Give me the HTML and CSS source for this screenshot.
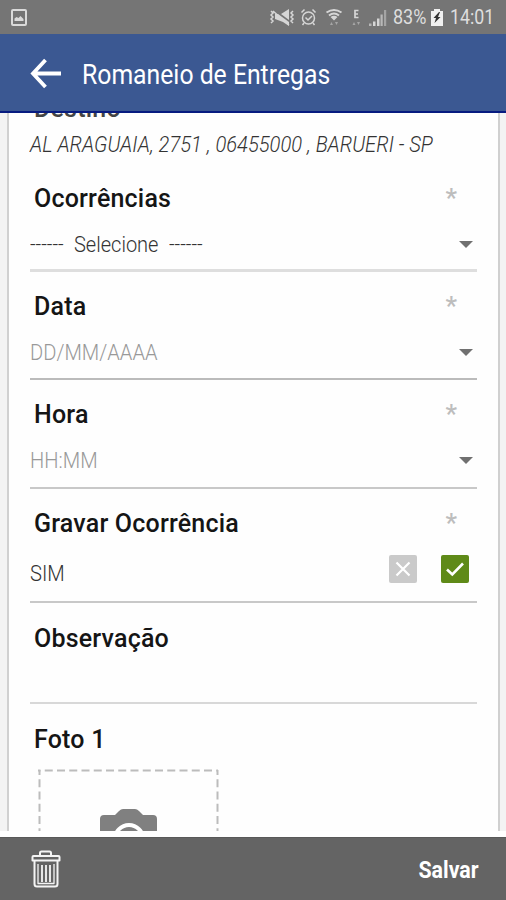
FILE: index.html
```html
<!DOCTYPE html>
<html lang="pt-BR">
<head>
<meta charset="utf-8">
<title>Romaneio de Entregas</title>
<link rel="stylesheet" href="styles.css">
</head>
<body>
<div class="status">
  <svg class="pic" width="16" height="17" viewBox="0 0 16 17"><rect x="1" y="1" width="14" height="15" rx="1" fill="none" stroke="#dadada" stroke-width="2"/><path d="M3.500 12V9.500l2-1.500 2 1 2-2 3 3v2z" fill="#dadada"/></svg>
  <svg class="icons" width="120" height="22" viewBox="0 0 120 22">
    <g fill="none" stroke="#d6d6d6" stroke-width="1.500">
      <path d="M2 5l2 2-2 2 2 2-2 2 2 2-2 2M24 5l-2 2 2 2-2 2 2 2-2 2 2 2M4 5l16 14"/>
      <circle cx="39.500" cy="12" r="6"/><path d="M36.500 11.500l2.500 2.500 4-4M32.500 6.500l3-3M46.500 6.500l-3-3M35 17l-1.500 2M44 17l1.500 2"/>
      <path d="M57.500 6.500q7.500-5 15 0M60 9.500q5-4 10 0" stroke-width="2"/>
      <path d="M89.500 4.500h-3.500v7h3.500M86 8h3" stroke-width="1.700"/>
    </g>
    <g fill="#d6d6d6"><path d="M6 8h3l11 8v4l-6-4-8-3zM12 8l8-5v11z"/><path d="M61.500 11q3.500-2.500 7 0L65 14.500z"/>
    <path d="M104 15.500h2.500V20H104zM108 12.500h2.500V20H108z"/></g>
    <g fill="#b8b8b8"><path d="M100 17.500h2.500V20H100zM111.500 8.500h2.200V20h-2.200z"/><path d="M115 4h2.200v16H115z" opacity=".7"/></g>
    <path d="M61 19h3l-1.500-3zM66 16h3l-1.500 3zM83.500 19h3l-1.500-3zM88 16h3l-1.500 3z" fill="#a6a6a6"/>
  </svg>
  <span class="sx pct">83%</span>
  <svg class="bat" width="12" height="17" viewBox="0 0 12 17"><path d="M3 2V0h6v2h3v15H0V2z" fill="#f0f0f0"/><path d="M8 3L2.500 9H5l-1.500 5L9.500 8H7L9 3z" fill="#333"/></svg>
  <span class="sx clock">14:01</span>
</div>
<header class="bar">
  <svg width="32" height="32" viewBox="0 0 32 32"><path d="M16.500 2L4 15.500 16.500 29M4 15.500h28" fill="none" stroke="#fff" stroke-width="3.800"/></svg>
  <h1 class="sx title">Romaneio de Entregas</h1>
</header>
<main class="view">
  <div class="card">
    <h2 class="label destino">Destino</h2>
    <p class="addr"><span class="sx addr-text">AL ARAGUAIA, 2751 , 06455000 , BARUERI - SP</span></p>
    <section class="field f1">
      <div class="head"><h2 class="label">Ocorrências</h2><span class="star">*</span></div>
      <div class="value"><span class="sel"><span class="sx dash">------</span><span class="sx sel-text">Selecione</span><span class="sx dash">------</span></span><i class="caret"></i></div>
    </section>
    <section class="field f2">
      <div class="head"><h2 class="label">Data</h2><span class="star">*</span></div>
      <div class="value hint"><span class="sx date">DD/MM/AAAA</span><i class="caret"></i></div>
    </section>
    <section class="field f3">
      <div class="head"><h2 class="label">Hora</h2><span class="star">*</span></div>
      <div class="value hint"><span class="sx time">HH:MM</span><i class="caret"></i></div>
    </section>
    <section class="field f4">
      <div class="head"><h2 class="label">Gravar Ocorrência</h2><span class="star">*</span></div>
      <div class="value sim"><span class="sx sim-text">SIM</span>
        <span class="checks">
          <svg width="28" height="28" viewBox="0 0 28 28"><rect width="28" height="28" rx="2" fill="#cacaca"/><path d="M7.500 7.500l13 13M20.500 7.500l-13 13" stroke="#fff" stroke-width="2.200"/></svg>
          <svg width="28" height="28" viewBox="0 0 28 28"><rect width="28" height="28" rx="2" fill="#5f8a18"/><path d="M6 14.500l5.300 5L22 8.500" fill="none" stroke="#fff" stroke-width="2.600"/></svg>
        </span>
      </div>
    </section>
    <section class="field f5"><div class="head"><h2 class="label">Observação</h2></div></section>
    <section class="field f6">
      <div class="head"><h2 class="label">Foto 1</h2></div>
      <div class="photo">
        <svg width="182" height="140" viewBox="0 0 182 140"><path d="M0 1.500h180" stroke="#bcbcbc" stroke-width="2" stroke-dasharray="8 4.250" stroke-dashoffset="5.500"/><path d="M1.500 1v139M179.500 1v139" stroke="#bcbcbc" stroke-width="2" stroke-dasharray="8 4.250" stroke-dashoffset="3"/>
        <path d="M66 46h11l4-4q2-2 4-2h12q2 0 4 2l4 4h10q4 0 4 4v40H62V50q0-4 4-4z" fill="#808080"/><circle cx="91" cy="70" r="14" fill="none" stroke="#fff" stroke-width="4"/></svg>
      </div>
    </section>
  </div>
</main>
<footer class="foot">
  <svg width="30" height="38" viewBox="0 0 30 38"><g fill="none" stroke="#f4f4f4" stroke-width="2" stroke-linejoin="round"><path d="M9 6V3q0-1.500 1.500-1.500h8q1.500 0 1.500 1.500v3M2.500 6h25q1 0 1 1v3.500h-27V7q0-1 1-1zM3.500 10.500V34q0 2.500 2.500 2.500h18q2.500 0 2.500-2.500V10.500"/><path d="M7 14v19.500h16V14" stroke-width="1.300"/><path d="M11 15v17M15 15v17M19 15v17" stroke-width="1.800"/></g></svg>
  <span class="sx save">Salvar</span>
</footer>
</body>
</html>
```
FILE: styles.css
```css
* { box-sizing: border-box; margin: 0; padding: 0; }
body { width: 506px; height: 900px; overflow: hidden; background: #fff; font-family: Roboto, sans-serif; display: flex; flex-direction: column; }
svg { display: block; flex: none; }
.sx { display: inline-block; white-space: nowrap; transform-origin: 0 50%; }
.status { height: 34px; flex: none; background: #757575; display: flex; align-items: center; color: #dedede; font-size: 20px; padding-left: 11px; }
.icons { margin-left: 242px; }
.pct { width: 34px; margin-left: 4px; transform: scaleX(.9); }
.bat { margin-left: 4px; margin-top: 1px; }
.clock { margin-left: 7px; transform: scaleX(.89); }
.bar { height: 79px; flex: none; background: #3b5892; border-bottom: 2px solid #071b80; display: flex; align-items: center; padding: 2px 0 0 29px; gap: 21px; color: #fff; }
.title { font-size: 27px; font-weight: 400; padding-top: 2px; transform: scaleX(.917); }
.view { height: 718px; flex: none; overflow: hidden; background: #f3f3f3; padding: 0 6px 0 7px; }
.card { height: 718px; overflow: hidden; width: 493px; background: #fefefe; border: solid #d0d0d0; border-width: 0 2px; padding: 0 21px; }
.label { font-size: 25px; font-weight: 500; line-height: 30px; color: #151515; padding-left: 4px; letter-spacing: .2px; }
.destino { margin-top: -19px; height: 30px; color: #444; }
.addr { height: 39px; padding-top: 7px; line-height: 28px; font-size: 22px; font-style: italic; font-weight: 300; color: #333; }
.addr-text { transform: scaleX(.916); }
.field { width: 447px; border-bottom: 2px solid #c8c8c8; }
.head { display: flex; justify-content: space-between; padding-right: 20px; height: 30px; }
.star { font-size: 26px; line-height: 28px; color: #bdbdbd; font-weight: 500; }
.value { display: flex; justify-content: space-between; align-items: center; height: 30px; margin-top: 15px; padding-right: 4px; font-size: 22px; font-weight: 300; color: #333; }
.hint { color: #999; }
.caret { width: 0; height: 0; border: solid transparent; border-width: 7px 7px 0; border-top-color: #707070; }
.f1 { height: 109px; padding-top: 21px; border-bottom: 3px solid #dedede; }
.f2 { height: 108px; padding-top: 20px; border-color: #bbb; }
.f3 { height: 109px; padding-top: 20px; }
.f4 { height: 114px; padding-top: 20px; }
.f5 { height: 101px; padding-top: 21px; border-color: #d8d8d8; }
.f6 { padding-top: 21px; border: 0; }
.sel { display: flex; }
.sel-text { width: 95px; margin-left: 11px; transform: scaleX(.91); }
.dash { width: 33px; transform: scaleX(.89); }
.date, .time, .sim-text { transform: scaleX(.915); }
.sim { padding-right: 8px; margin-top: 19px; }
.checks { display: flex; gap: 24px; margin-top: -9px; }
.photo { margin: 14px 0 0 8px; }
.foot { height: 63px; margin-top: 6px; flex: none; background: #646464; border-top: 1px solid #595959; display: flex; align-items: center; justify-content: space-between; padding: 0 27px 0 31px; color: #fff; }
.save { font-size: 24px; font-weight: 700; padding-top: 2px; transform: scaleX(.89); transform-origin: 100% 50%; }
```
